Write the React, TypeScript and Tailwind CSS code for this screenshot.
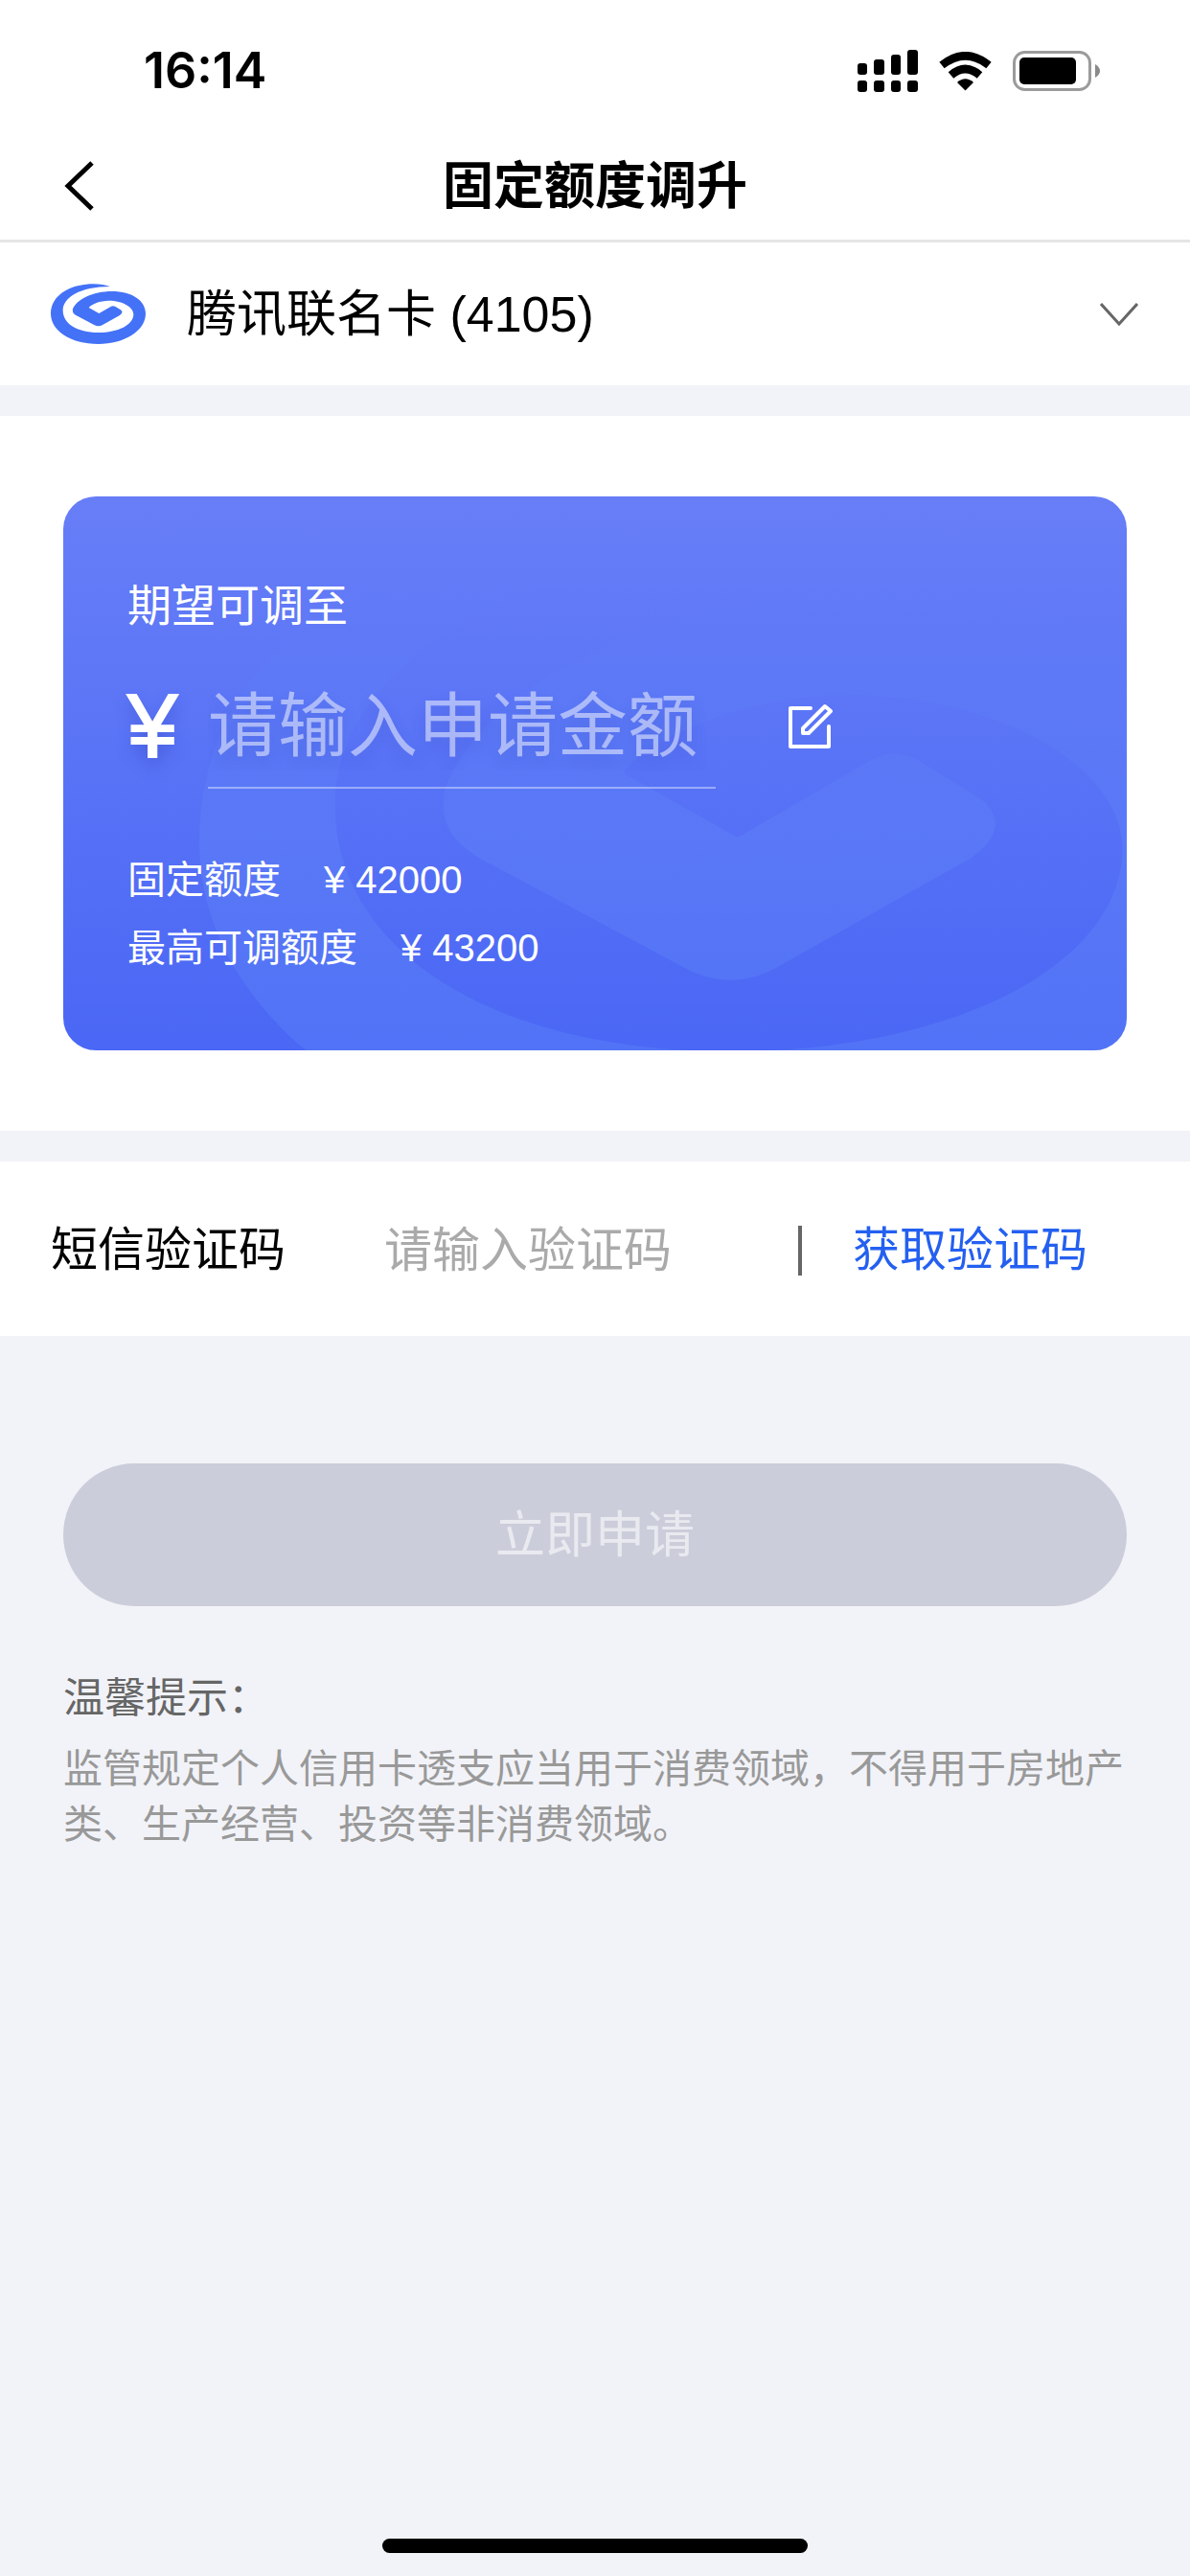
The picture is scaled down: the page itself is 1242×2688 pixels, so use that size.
import { useState } from 'react'

const SWIRL_PATH =
  'M255 90 C225 78 160 76 115 103 C80 123 69 150 69 175 C69 228 130 270 218 270 C300 270 366 228 366 175 C366 135 325 105 260 105 C200 105 150 130 138 160 C136 170 140 175 148 180 L206 211 Q218 217 230 211 L285 180 Q298 171 288 163 L270 152 Q264 149 258 152 L220 174 L188 156 C195 145 225 134 250 134 C295 134 328 155 328 177 C328 210 280 234 218 234 C150 234 107 205 107 165 C107 125 160 90 255 90 Z'

const CARDS = ['腾讯联名卡 (4105)']

const LIMITS = [
  { label: '固定额度', value: '42000' },
  { label: '最高可调额度', value: '43200' },
]

function StatusBar() {
  return (
    <div className="flex h-[138px] items-center justify-between pt-[10px] pr-[94px] pl-[150px]">
      <span className="font-['Inter',sans-serif] text-[52px] leading-none font-semibold">16:14</span>

      <div className="flex items-center gap-[22px]">
        {/* Signal */}
        <svg width="63" height="44" viewBox="0 0 63 44">
          <rect x="0" y="14" width="10" height="12" rx="3" />
          <rect x="17" y="10" width="11" height="16" rx="3" />
          <rect x="35" y="5" width="10" height="21" rx="3" />
          <rect x="52" y="0" width="11" height="26" rx="3" />
          <rect x="0" y="32" width="10" height="12" rx="3" />
          <rect x="17" y="32" width="11" height="12" rx="3" />
          <rect x="35" y="32" width="10" height="12" rx="3" />
          <rect x="52" y="32" width="11" height="12" rx="3" />
        </svg>

        {/* Wifi */}
        <svg width="55" height="41" viewBox="0 0 55 41">
          <path d="M3 14 Q27.5 -5.5 52 14" fill="none" stroke="#000" strokeWidth="8.5" />
          <path d="M12.5 24.5 Q27.5 11.5 42.5 24.5" fill="none" stroke="#000" strokeWidth="8.5" />
          <path d="M19 32 Q27.5 24.5 36 32 L27.5 40.5 Z" />
        </svg>

        {/* Battery */}
        <svg width="91" height="42" viewBox="0 0 91 42">
          <rect x="1.5" y="1.5" width="79" height="39" rx="11" fill="none" stroke="#9b9b9b" strokeWidth="3" />
          <rect x="7" y="7" width="59" height="28" rx="5" />
          <path d="M86 14 Q91 17 91 21 Q91 25 86 28 Z" fill="#8a8a8a" />
        </svg>
      </div>
    </div>
  )
}

function NavBar() {
  return (
    <div className="grid h-[115px] grid-cols-[1fr_auto_1fr] items-center border-b-[3px] border-[#e5e5e5] px-[66px]">
      <button type="button" aria-label="返回" className="justify-self-start">
        <svg width="32" height="52" viewBox="0 0 32 52" fill="none" stroke="#000" strokeWidth="5">
          <path d="M30 2 L5 26 L30 50" />
        </svg>
      </button>
      <h1 className="text-[53px] leading-none font-bold">固定额度调升</h1>
    </div>
  )
}

function CardSelect() {
  return (
    <div className="flex h-[149px] items-center bg-white pr-[54px] pl-[53px]">
      <svg width="99" height="63" viewBox="69 81 297 189" fill="#4472f7">
        <path d={SWIRL_PATH} />
      </svg>
      <select
        aria-label="信用卡"
        className="ml-[43px] flex-1 appearance-none bg-transparent text-[52px] leading-[72px] outline-none"
      >
        {CARDS.map((card) => (
          <option key={card}>{card}</option>
        ))}
      </select>
      <svg width="40" height="24" viewBox="0 0 40 24" fill="none" stroke="#666" strokeWidth="3">
        <path d="M1 1 L20 22 L39 1" />
      </svg>
    </div>
  )
}

function AmountCard() {
  const [amount, setAmount] = useState('')

  return (
    <div className="relative overflow-hidden rounded-[34px] bg-linear-to-b from-[#677ef7] to-[#4a67f5] px-[67px] pt-[84px] pb-[71px] text-white">
      {/* Watermark */}
      <svg width="1105" height="703" viewBox="69 81 297 189" className="absolute top-[10px] left-[142px]">
        <defs>
          <linearGradient id="watermark" x1="0" y1="0" x2="0" y2="1">
            <stop offset="0.1" stopColor="#5c86f6" stopOpacity="0" />
            <stop offset="0.5" stopColor="#6084f8" stopOpacity="0.4" />
            <stop offset="1" stopColor="#5a84f8" stopOpacity="0.4" />
          </linearGradient>
        </defs>
        <path d={SWIRL_PATH} fill="url(#watermark)" />
      </svg>

      <div className="relative">
        <label htmlFor="amount" className="block text-[46px] leading-[60px]">
          期望可调至
        </label>

        <div className="mt-[43px] flex items-start">
          <span className="w-[84px] text-[94px] leading-[106px] [-webkit-text-stroke:2px_white] text-shadow-[0_10px_16px_rgba(40,60,180,0.4)]">
            ¥
          </span>
          <input
            id="amount"
            inputMode="numeric"
            value={amount}
            onChange={(e) => setAmount(e.target.value)}
            placeholder="请输入申请金额"
            className="h-[118px] w-[530px] border-b-2 border-white/40 bg-transparent pb-3 text-[73px] outline-none text-shadow-[0_10px_16px_rgba(40,60,180,0.2)] placeholder:text-white/50"
          />
          <label htmlFor="amount" className="ml-[76px] flex h-[106px] items-center">
            <svg width="48" height="48" viewBox="0 0 48 48" fill="none" stroke="#fff" strokeWidth="4" strokeLinejoin="round" strokeLinecap="round">
              <path d="M23 5 H2 V45 H42 V24" />
              <path d="M38 3 L44 8 L21 31 H15 V26 Z" />
            </svg>
          </label>
        </div>

        <dl className="mt-[60px] text-[40px] leading-[71px]">
          {LIMITS.map(({ label, value }) => (
            <div key={label} className="flex gap-[45px]">
              <dt>{label}</dt>
              <dd>¥ {value}</dd>
            </div>
          ))}
        </dl>
      </div>
    </div>
  )
}

function SmsCodeRow() {
  const [code, setCode] = useState('')

  return (
    <div className="flex h-[182px] items-center bg-white pt-1 pr-[107px] pl-[53px] text-[49px]">
      <label htmlFor="code" className="w-[348px]">
        短信验证码
      </label>
      <input
        id="code"
        inputMode="numeric"
        value={code}
        onChange={(e) => setCode(e.target.value)}
        placeholder="请输入验证码"
        className="min-w-0 flex-1 bg-transparent text-[50px] outline-none placeholder:text-[#aaa]"
      />
      <span className="h-[52px] w-1 bg-[#666]" />
      <button type="button" className="ml-[53px] text-[#2460f0]">
        获取验证码
      </button>
    </div>
  )
}

export default function App() {
  return (
    <div
      lang="zh-CN"
      className="flex min-h-screen flex-col bg-[#f2f3f8] font-['Liberation_Sans','Noto_Sans_CJK_SC',sans-serif] text-black"
    >
      <header className="bg-white">
        <StatusBar />
        <NavBar />
      </header>

      <main className="flex-1">
        <CardSelect />

        <section className="mt-8 bg-white px-[66px] py-[84px]">
          <AmountCard />
        </section>

        <section className="mt-8">
          <SmsCodeRow />
        </section>

        <section className="px-[66px] pt-[133px]">
          <button
            type="button"
            disabled
            className="h-[149px] w-full rounded-full bg-[#cccdda] text-[52px] text-[#e9eaf0]"
          >
            立即申请
          </button>

          <h2 className="mt-[65px] text-[43px] leading-[62px] text-[#666]">温馨提示：</h2>
          <p className="mt-[14px] text-[41px] leading-[58px] text-[#999]">
            监管规定个人信用卡透支应当用于消费领域，不得用于房地产类、生产经营、投资等非消费领域。
          </p>
        </section>
      </main>

      <div className="mx-auto mb-6 h-[15px] w-[444px] rounded-full bg-black" />
    </div>
  )
}
